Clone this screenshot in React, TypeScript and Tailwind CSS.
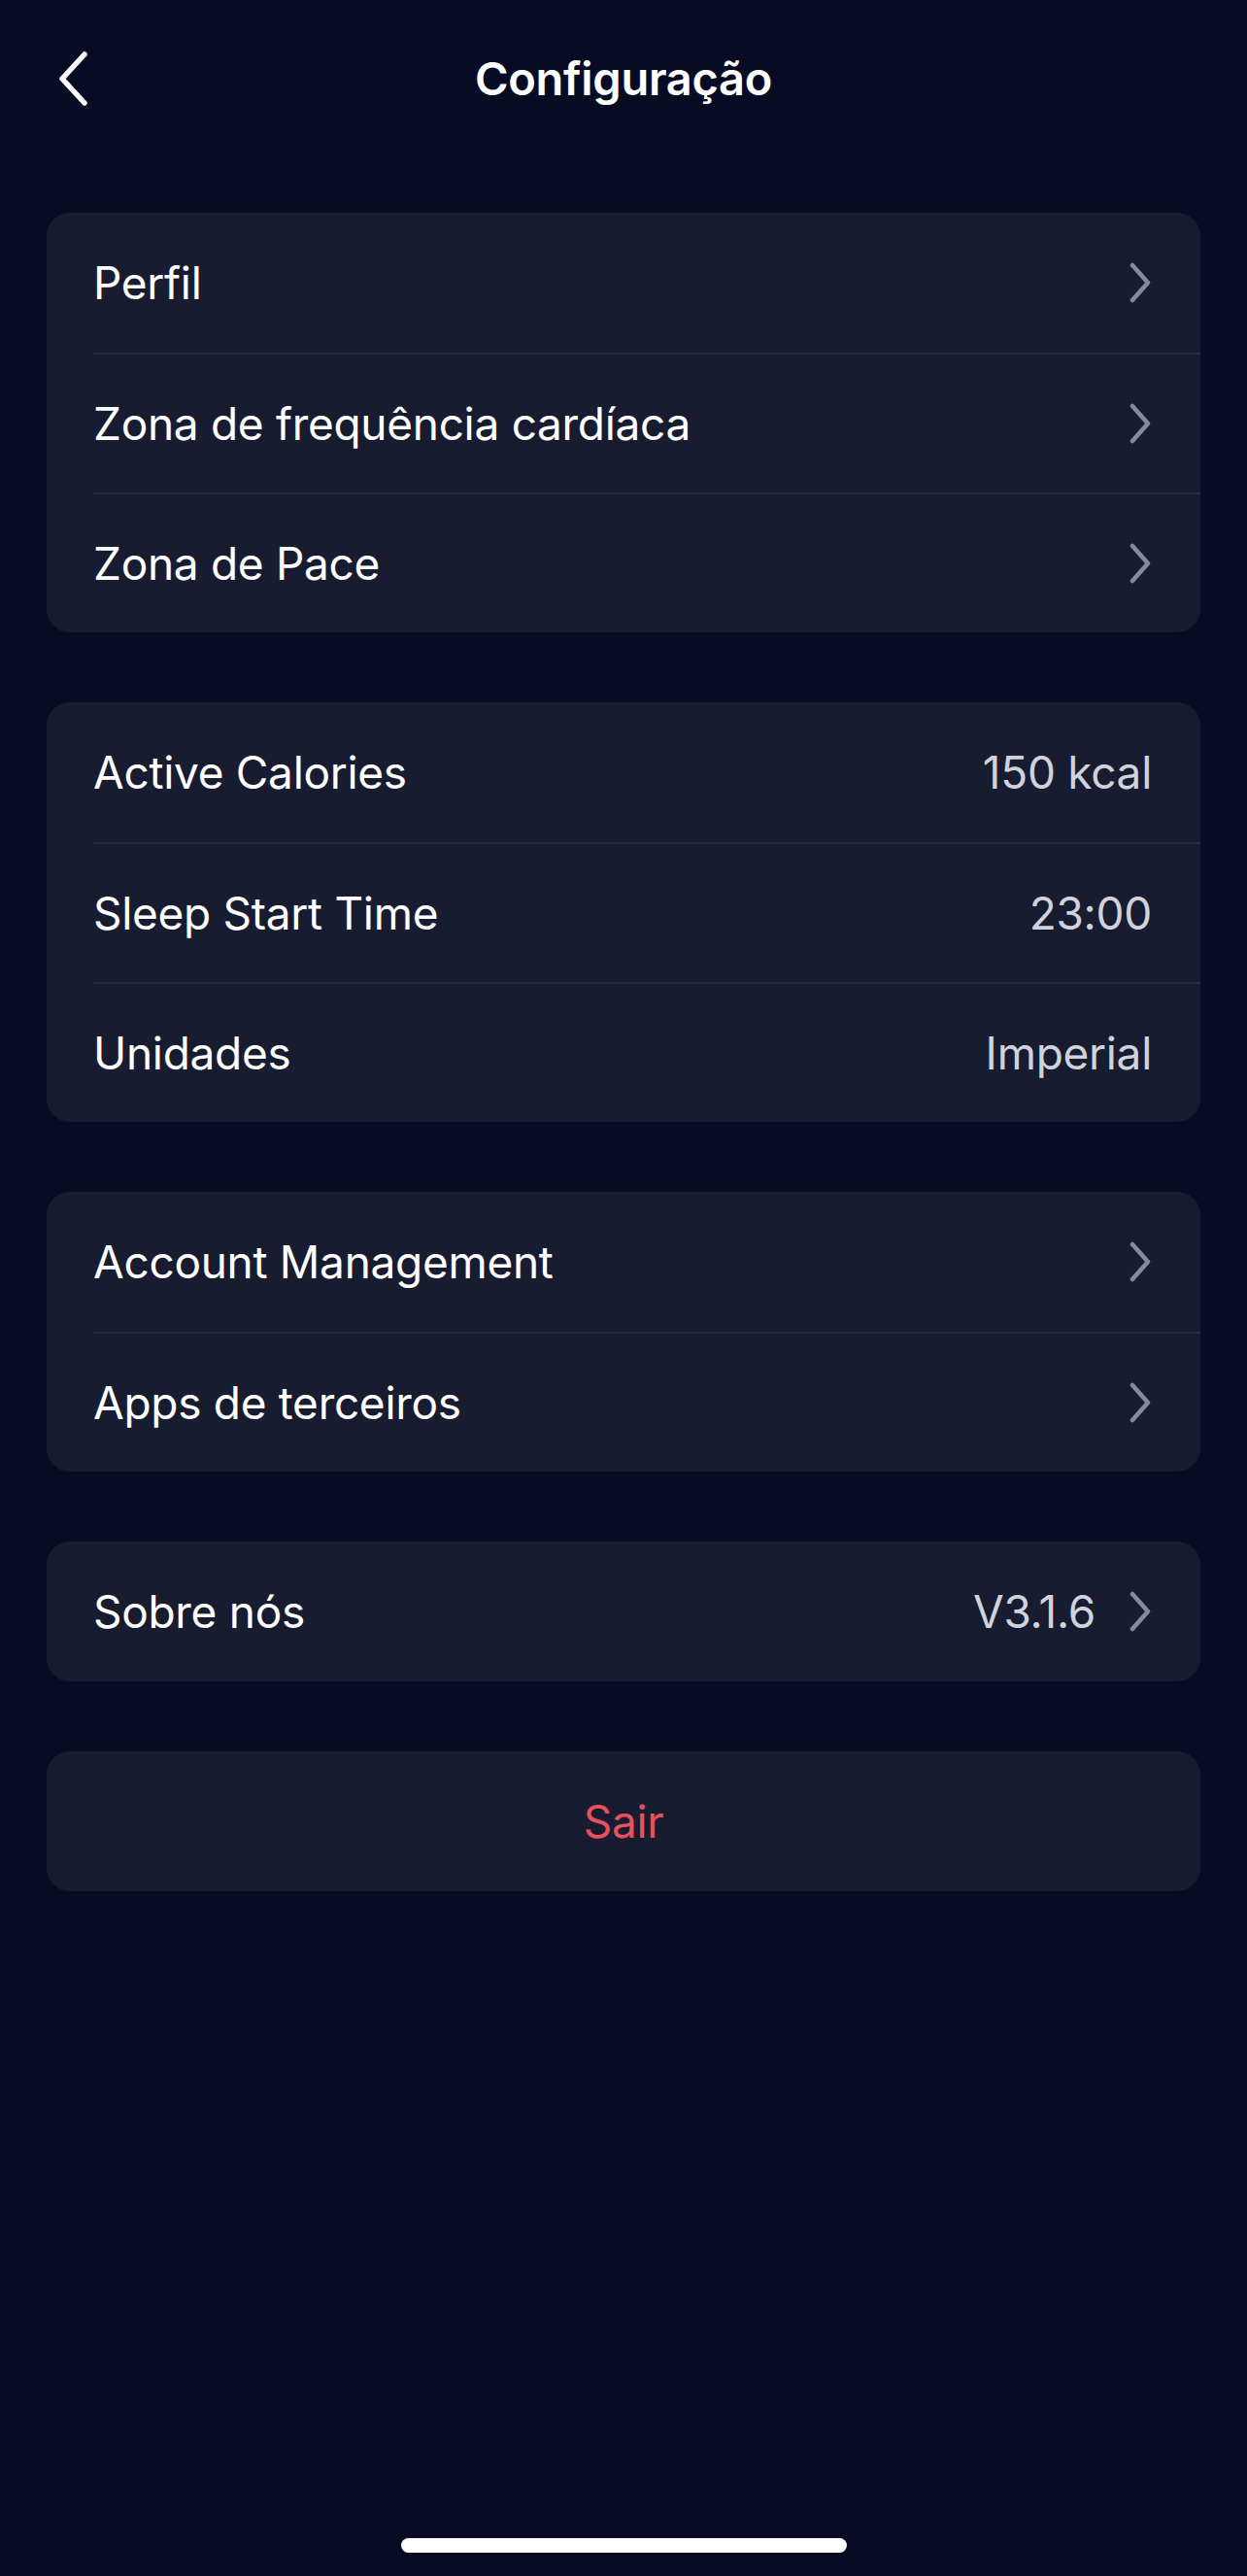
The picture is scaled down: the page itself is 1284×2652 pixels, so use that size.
import React from "react";

type Row = {
  label: string;
  value?: string;
  arrow?: boolean;
};

const groups: Row[][] = [
  [
    { label: "Perfil", arrow: true },
    { label: "Zona de frequência cardíaca", arrow: true },
    { label: "Zona de Pace", arrow: true },
  ],
  [
    { label: "Active Calories", value: "150 kcal" },
    { label: "Sleep Start Time", value: "23:00" },
    { label: "Unidades", value: "Imperial" },
  ],
  [
    { label: "Account Management", arrow: true },
    { label: "Apps de terceiros", arrow: true },
  ],
  [{ label: "Sobre nós", value: "V3.1.6", arrow: true }],
];

function Chevron() {
  return (
    <svg width="24" height="42" viewBox="0 0 24 42" fill="none" className="shrink-0">
      <path
        d="M4 3 L20 21 L4 39"
        stroke="#878a9c"
        strokeWidth="4.5"
        strokeLinecap="round"
        strokeLinejoin="round"
      />
    </svg>
  );
}

function BackArrow() {
  return (
    <svg width="34" height="56" viewBox="0 0 34 56" fill="none">
      <path
        d="M29 3 L6 28 L29 53"
        stroke="#ffffff"
        strokeWidth="5.5"
        strokeLinecap="round"
        strokeLinejoin="round"
      />
    </svg>
  );
}

function SettingsRow({ row, first }: { row: Row; first: boolean }) {
  return (
    <div className={`ml-[48px] h-[144px] flex items-center justify-between pr-[50px] ${first ? "" : "border-t-2 border-[#262a3e]"}`}>
      <span className="text-[46px] text-white tracking-[-0.3px]">{row.label}</span>
      <div className="flex items-center gap-[34px]">
        {row.value && (
          <span className="text-[46px] text-[#d0d2dc] tracking-[-0.3px]">{row.value}</span>
        )}
        {row.arrow && <Chevron />}
      </div>
    </div>
  );
}

export default function App() {
  return (
    <div className="w-full h-[2652px] bg-[#070c24] font-['Inter',sans-serif] flex flex-col">
      {/* Header */}
      <div className="h-[162px] grid grid-cols-[1fr_auto_1fr] items-center">
        <div className="pl-[58px] flex items-center">
          <BackArrow />
        </div>
        <h1 className="text-[47px] font-semibold text-white tracking-[-0.3px]">Configuração</h1>
        <div />
      </div>

      {/* Groups */}
      <div className="px-[48px] pt-[57px] flex flex-col gap-[72px]">
        {groups.map((group, gi) => (
          <div key={gi} className="bg-[#181c30] rounded-[24px] overflow-hidden">
            {group.map((row, ri) => (
              <SettingsRow key={row.label} row={row} first={ri === 0} />
            ))}
          </div>
        ))}

        <button className="bg-[#181c30] rounded-[24px] h-[144px] flex items-center justify-center">
          <span className="text-[46px] text-[#e5525b] tracking-[-0.3px]">Sair</span>
        </button>
      </div>

      <div className="flex-1" />

      {/* Home indicator */}
      <div className="flex justify-center pb-[24px]">
        <div className="w-[459px] h-[15px] rounded-full bg-white" />
      </div>
    </div>
  );
}
